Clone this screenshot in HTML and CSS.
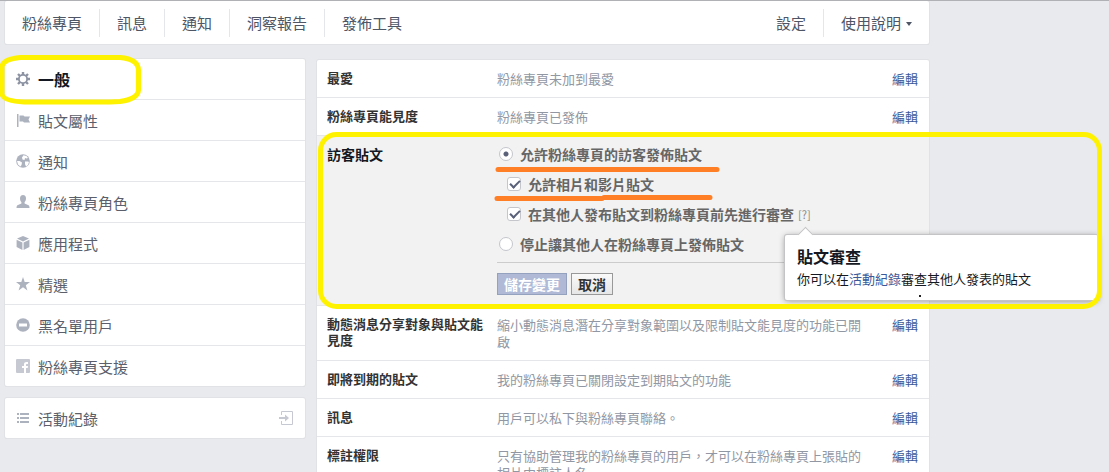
FILE: index.html
```html
<!DOCTYPE html>
<html lang="zh-Hant">
<head>
  <meta charset="UTF-8">
  <meta name="viewport" content="width=device-width, initial-scale=1.0">
  <title>粉絲專頁設定</title>
  <link rel="stylesheet" href="styles.css">
</head>
<body>
  <div class="page">
    <header class="topbar">
      <nav class="tabs">
        <a href="#">粉絲專頁</a>
        <a href="#">訊息</a>
        <a href="#">通知</a>
        <a href="#">洞察報告</a>
        <a href="#">發佈工具</a>
      </nav>
      <nav class="tabs">
        <a href="#">設定</a>
        <a href="#">使用說明<span class="caret"></span></a>
      </nav>
    </header>

    <div class="columns">
      <aside class="sidebar">
        <ul class="card menu">
          <li class="selected"><a href="#">
            <svg class="icon" viewBox="0 0 14 14"><g stroke="currentColor" stroke-width="2.4"><path d="M7 0v14M0 7h14M2 2l10 10M12 2L2 12"/></g><circle cx="7" cy="7" r="5" fill="currentColor"/><circle cx="7" cy="7" r="3.2" fill="#fff"/></svg>
            一般</a></li>
          <li><a href="#">
            <svg class="icon" viewBox="0 0 14 14"><path d="M1 1h1.500v13H1z" fill="currentColor"/><path d="M3.500 2.500h4l1 1H14L12.500 6.500 14 9.500H8l-1-1H3.500z" fill="currentColor"/></svg>
            貼文屬性</a></li>
          <li><a href="#">
            <svg class="icon" viewBox="0 0 14 14"><circle cx="7" cy="7" r="6.800" fill="currentColor"/><path d="M7.500 1.200l3 .8 1.500 2-1.500.5L9 4 8.500 6 6.500 5.500 6 3.500zM1 7l2.500 0L6 8.500 5.500 11l-1 1.500L2 10.500zM9 7.500h3l1 .5-1 3-2 1.500L9 10z" fill="#fff"/></svg>
            通知</a></li>
          <li><a href="#">
            <svg class="icon" viewBox="0 0 14 14"><path d="M7 0c2 0 3 1.500 3 3.500C10 5 9.300 6.500 8.600 7v1.500L12 10c1 .4 1.500 1 1.500 3H.5c0-2 .5-2.600 1.500-3l3.400-1.500V7C4.700 6.500 4 5 4 3.500 4 1.500 5 0 7 0z" fill="currentColor"/></svg>
            粉絲專頁角色</a></li>
          <li><a href="#">
            <svg class="icon" viewBox="0 0 14 14"><path d="M7 0l6 2.600L7 5.400 1 2.600zM.6 3.700l5.800 2.700V14L.6 11zM13.400 3.700L7.600 6.400V14l5.800-3z" fill="currentColor"/></svg>
            應用程式</a></li>
          <li><a href="#">
            <svg class="icon" viewBox="0 0 14 14"><path d="M7 0l1.700 5H14L9.800 8.200 11.400 13.500 7 10.300l-4.400 3.200L4.200 8.200 0 5h5.300z" fill="currentColor"/></svg>
            精選</a></li>
          <li><a href="#">
            <svg class="icon" viewBox="0 0 14 14"><circle cx="7" cy="7" r="6.800" fill="currentColor"/><path d="M3 5.500h8v3H3z" fill="#fff"/></svg>
            黑名單用戶</a></li>
          <li class="pale"><a href="#">
            <svg class="icon" viewBox="0 0 14 14"><rect width="14" height="14" rx="1" fill="currentColor"/><path d="M8 14V9H6V7h2V5.500C8 3.700 9 3 10.500 3H12v2h-1c-.8 0-1 .3-1 1v1h2l-.3 2H10v5z" fill="#fff"/></svg>
            粉絲專頁支援</a></li>
        </ul>
        <ul class="card menu">
          <li><a href="#">
            <svg class="icon" viewBox="0 0 14 14"><path d="M1 2h2v2H1zM4 2h9v2H4zM1 6h2v2H1zM4 6h9v2H4zM1 10h2v2H1zM4 10h9v2H4z" fill="currentColor"/></svg>
            活動紀錄
            <svg class="icon exit" viewBox="0 0 14 14"><path d="M2.500 4V.5h11v13h-11V10" fill="none" stroke="currentColor"/><path d="M0 6h6V3.500L10 7l-4 3.500V8H0z" fill="currentColor"/></svg>
          </a></li>
        </ul>
      </aside>

      <main class="card settings">
        <section class="row">
          <h3>最愛</h3>
          <p>粉絲專頁未加到最愛</p>
          <a href="#">編輯</a>
        </section>
        <section class="row">
          <h3>粉絲專頁能見度</h3>
          <p>粉絲專頁已發佈</p>
          <a href="#">編輯</a>
        </section>
        <section class="row open">
          <h3>訪客貼文</h3>
          <form>
            <div class="options">
              <label class="option"><input type="radio" name="posts" checked><span>允許粉絲專頁的訪客發佈貼文</span></label>
              <label class="option sub"><input type="checkbox" checked><span>允許相片和影片貼文</span></label>
              <div class="option sub">
                <input type="checkbox" id="review" checked>
                <label for="review">在其他人發布貼文到粉絲專頁前先進行審查</label>
                <span class="help">[?]
                  <span class="tooltip">
                    <strong>貼文審查</strong>
                    <span>你可以在<a href="#">活動紀錄</a>審查其他人發表的貼文</span>
                  </span>
                </span>
              </div>
              <label class="option"><input type="radio" name="posts"><span>停止讓其他人在粉絲專頁上發佈貼文</span></label>
            </div>
            <div class="buttons">
              <button type="submit" class="save" disabled>儲存變更</button>
              <button type="button">取消</button>
            </div>
          </form>
        </section>
        <section class="row">
          <h3>動態消息分享對象與貼文能見度</h3>
          <p>縮小動態消息潛在分享對象範圍以及限制貼文能見度的功能已開啟</p>
          <a href="#">編輯</a>
        </section>
        <section class="row">
          <h3>即將到期的貼文</h3>
          <p>我的粉絲專頁已關閉設定到期貼文的功能</p>
          <a href="#">編輯</a>
        </section>
        <section class="row">
          <h3>訊息</h3>
          <p>用戶可以私下與粉絲專頁聯絡。</p>
          <a href="#">編輯</a>
        </section>
        <section class="row">
          <h3>標註權限</h3>
          <p>只有協助管理我的粉絲專頁的用戶，才可以在粉絲專頁上張貼的相片中標註人名</p>
          <a href="#">編輯</a>
        </section>
      </main>
    </div>
  </div>

  <!-- hand-drawn marks over the page -->
  <svg class="marks" width="1109" height="472" viewBox="0 0 1109 472" fill="none" stroke-linecap="round">
    <g stroke="#fff200" stroke-width="5">
      <path d="M20 57.500H120Q138 59 138.500 70V90Q138 99 120 101.500L110 102H24Q3 101 2 94V66Q4 59 20 57.500z"/>
      <rect x="320.500" y="134.500" width="779" height="172" rx="16"/>
    </g>
    <path stroke="#ff7f27" stroke-width="5" d="M498 169.500H717M497 198.500H602M604 197.500H710"/>
    <path fill="#222" d="M919 295h2v2h-2z"/>
  </svg>
</body>
</html>
```
FILE: styles.css
```css
* {
  box-sizing: border-box;
}
body {
  margin: 0;
  height: 100vh;
  overflow: hidden;
  position: relative;
  background: #e9eaed;
  border-top: 1px solid #b0b1b5;
  color: #4e5665;
  font: 13px/17px "Noto Sans CJK TC", sans-serif;
}
a {
  color: #3b5998;
  text-decoration: none;
}
h3, p, ul {
  margin: 0;
  padding: 0;
}
.page {
  max-width: 929px;
  padding-left: 5px;
}
.topbar,
.card {
  background: #fff;
  border-radius: 2px;
  box-shadow: 0 0 0 1px #e1e2e6, 0 1px 0 0 #d0d1d5;
}
.topbar {
  display: flex;
  justify-content: space-between;
  height: 43px;
}
.tabs {
  display: flex;
  align-items: center;
}
.tabs a {
  padding: 0 17px;
  font-size: 15px;
  line-height: 28px;
  color: #4e5665;
}
.tabs a + a {
  border-left: 1px solid #e5e6e9;
}
.caret {
  display: inline-block;
  margin-left: 5px;
  vertical-align: 3px;
  border: 3px solid transparent;
  border-top: 4px solid #4e5665;
  border-bottom: 0;
}

/* left menu */
.columns {
  display: grid;
  grid-template-columns: 300px 1fr;
  gap: 12px;
  align-items: start;
  margin-top: 16px;
}
.sidebar {
  display: grid;
  gap: 12px;
  margin-top: -1px;
}
.menu {
  list-style: none;
}
.menu li + li {
  border-top: 1px solid #e5e6e9;
}
.menu a {
  display: flex;
  align-items: center;
  gap: 8px;
  height: 40px;
  padding: 0 12px 0 11px;
  font-size: 15px;
  color: #5a5f6b;
}
.menu .selected a {
  font-size: 16px;
  font-weight: bold;
  color: #141823;
}
.icon {
  width: 14px;
  height: 14px;
  color: #adb2bf;
}
.selected .icon {
  color: #8d93a3;
}
.pale .icon,
.exit {
  color: #c6c9d2;
}
.exit {
  margin-left: auto;
}

/* settings list */
.row {
  display: grid;
  grid-template-columns: 158px 1fr auto;
  column-gap: 12px;
  padding: 10px 11px 10px 10px;
}
.row + .row {
  border-top: 1px solid #e5e6e9;
}
.row h3 {
  font-size: 13px;
  line-height: 16px;
  color: #333;
}
.row p {
  padding-right: 18px;
  color: #9197a3;
}
.row.open {
  background: #f2f2f2;
  padding-top: 9px;
}
.row.open h3 {
  font-size: 14px;
  line-height: 18px;
  color: #141823;
}
.row form {
  grid-column: 2 / 4;
}
.options {
  display: grid;
  gap: 12px;
}
.option {
  display: flex;
  align-items: center;
  gap: 7px;
  height: 18px;
  padding-left: 2px;
  font-size: 14px;
  font-weight: bold;
  color: #666;
}
.option.sub {
  padding-left: 10px;
}
.option input {
  appearance: none;
  width: 14px;
  height: 14px;
  margin: 0;
  background: #fff;
  border: 1px solid #c4c6cc;
  border-radius: 3px;
}
.option input[type="radio"] {
  border-radius: 50%;
}
.option input[type="radio"]:checked {
  background: radial-gradient(circle, #5a6178 2px, #fff 3px);
}
.option input[type="checkbox"]:checked::before {
  content: "";
  display: block;
  width: 8px;
  height: 4px;
  margin: 2px;
  border: solid #5a6178;
  border-width: 0 0 2px 2px;
  transform: rotate(-45deg);
}
.help {
  position: relative;
  margin-left: -3px;
  font-size: 11px;
  font-weight: normal;
  color: #888;
}
.tooltip {
  position: absolute;
  top: 29px;
  left: -13px;
  width: 313px;
  padding: 11px 12px;
  background: #fff;
  border-radius: 2px;
  box-shadow: 0 0 0 1px #c4c4c6, 0 1px 6px rgba(0, 0, 0, 0.4);
  font-size: 13px;
  line-height: 20px;
  color: #141823;
}
.tooltip::before {
  content: "";
  position: absolute;
  top: -6px;
  left: 15px;
  width: 10px;
  height: 10px;
  background: #fff;
  border: solid #c4c4c6;
  border-width: 1px 0 0 1px;
  transform: rotate(45deg);
}
.tooltip strong {
  display: block;
  margin-bottom: 3px;
  font-size: 16px;
}
.buttons {
  display: flex;
  gap: 4px;
  margin-top: 9px;
  padding-top: 10px;
  border-top: 1px solid #ccc;
}
.buttons button {
  height: 22px;
  padding: 0 6px;
  background: linear-gradient(#fafafa, #e6e6e6);
  border: 1px solid #999;
  font: bold 14px/18px "Noto Sans CJK TC", sans-serif;
  color: #333;
}
.buttons .save {
  background: #b0bad6;
  border-color: #94a2bf;
  color: #fff;
}
.marks {
  position: absolute;
  top: -1px;
  left: 0;
  pointer-events: none;
}
```
